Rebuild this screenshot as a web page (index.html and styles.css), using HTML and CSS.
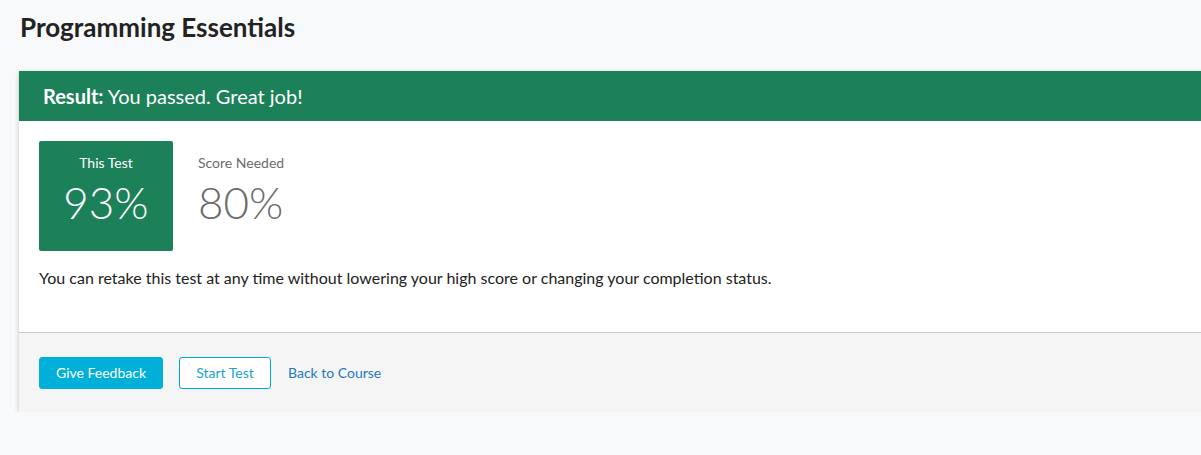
FILE: index.html
```html
<!DOCTYPE html>
<html lang="en">
<head>
<meta charset="utf-8">
<title>Programming Essentials</title>
<link rel="stylesheet" href="styles.css">
</head>
<body>
<div class="page">
  <h1 class="title">Programming Essentials</h1>
  <section class="card">
    <div class="card-head"><strong>Result:</strong> You passed. Great job!</div>
    <div class="card-body">
      <div class="scores">
        <div class="score score-this">
          <div class="score-label">This Test</div>
          <div class="score-value">93%</div>
        </div>
        <div class="score score-needed">
          <div class="score-label">Score Needed</div>
          <div class="score-value">80%</div>
        </div>
      </div>
      <p class="note">You can retake this test at any time without lowering your high score or changing your completion status.</p>
    </div>
    <div class="card-foot">
      <button class="btn btn-primary">Give Feedback</button>
      <button class="btn btn-outline">Start Test</button>
      <a class="link" href="#">Back to Course</a>
    </div>
  </section>
</div>
</body>
</html>
```
FILE: styles.css
```css
html, body {
  margin: 0;
  padding: 0;
  background: #f8f9fb;
  overflow: hidden;
}
body {
  font-family: Lato, "Liberation Sans", sans-serif;
  color: #2d3b45;
}
.page {
  padding: 11px 0 0 19px;
  width: 1240px;
}
.title {
  margin: 0 0 28px 1px;
  font-size: 26px;
  font-weight: 700;
  color: #222;
  line-height: 32px;
}
.card {
  background: #fff;
  box-shadow: 0 2px 5px rgba(0,0,0,0.22);
}
.card-head {
  background: #1c8159;
  color: #fff;
  height: 50px;
  line-height: 50px;
  padding-left: 24px;
  font-size: 20px;
}
.card-head strong { font-weight: 700; }
.card-body {
  padding: 20px 20px 0 20px;
  height: 191px;
  border-bottom: 1px solid #c8c8c8;
}
.scores {
  display: flex;
  gap: 25px;
}
.score {
  width: 134px;
  height: 110px;
  box-sizing: border-box;
  padding-top: 14px;
  border-radius: 2px;
}
.score-this {
  background: #1c8159;
  color: #fff;
  text-align: center;
}
.score-needed {
  color: #6c6c6c;
}
.score-label {
  font-size: 14px;
  line-height: 16px;
}
.score-value {
  font-size: 44px;
  font-weight: 300;
  line-height: 50px;
  margin-top: 6px;
}
.note {
  margin: 16px 0 0 0;
  font-size: 16px;
  line-height: 22px;
  color: #222;
}
.card-foot {
  background: #f5f5f5;
  height: 79px;
  display: flex;
  align-items: center;
  padding-left: 20px;
  gap: 16px;
}
.btn {
  font-family: Lato, "Liberation Sans", sans-serif;
  font-size: 14px;
  height: 32px;
  border-radius: 3px;
  padding: 0;
  white-space: nowrap;
  cursor: pointer;
  box-sizing: border-box;
}
.btn-primary {
  background: #00b0d9;
  border: 1px solid #00b0d9;
  color: #fff;
  width: 124px;
}
.btn-outline {
  background: #fff;
  border: 1px solid #00a9d4;
  color: #1aa3cc;
  width: 92px;
}
.link {
  font-size: 14px;
  color: #1f78c1;
  text-decoration: none;
  margin-left: 1px;
}
```
